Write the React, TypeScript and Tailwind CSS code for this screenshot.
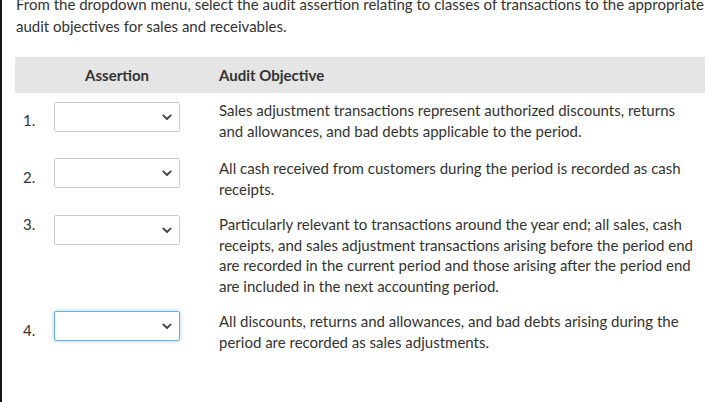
import React from "react";

const Chevron = () => (
  <svg width="10" height="7" viewBox="0 0 10 7" className="shrink-0">
    <path d="M1.3 1.4 L5 5 L8.7 1.4" fill="none" stroke="#444" strokeWidth="1.9" strokeLinecap="round" strokeLinejoin="round" />
  </svg>
);

type Row = {
  n: string;
  text: string;
  rowMt: string;
  numMt: string;
  selMt: string;
  focus?: boolean;
};

const rows: Row[] = [
  {
    n: "1.",
    text: "Sales adjustment transactions represent authorized discounts, returns and allowances, and bad debts applicable to the period.",
    rowMt: "mt-[7px]",
    numMt: "mt-[10px]",
    selMt: "mt-[2px]",
  },
  {
    n: "2.",
    text: "All cash received from customers during the period is recorded as cash receipts.",
    rowMt: "mt-[17px]",
    numMt: "mt-[9px]",
    selMt: "mt-0",
  },
  {
    n: "3.",
    text: "Particularly relevant to transactions around the year end; all sales, cash receipts, and sales adjustment transactions arising before the period end are recorded in the current period and those arising after the period end are included in the next accounting period.",
    rowMt: "mt-[15px]",
    numMt: "mt-0",
    selMt: "mt-[1px]",
  },
  {
    n: "4.",
    text: "All discounts, returns and allowances, and bad debts arising during the period are recorded as sales adjustments.",
    rowMt: "mt-[15px]",
    numMt: "mt-[9px]",
    selMt: "mt-0",
    focus: true,
  },
];

export default function App() {
  return (
    <div
      className="w-[708px] h-[402px] overflow-hidden bg-white border-l-2 border-[#161616] text-[#333333] text-[15px]"
      style={{ fontFamily: "Lato, 'Open Sans', sans-serif" }}
    >
      <p className="mt-[-7px] pl-[14px] pr-0 w-[706px] leading-[22px]">
        From the dropdown menu, select the audit assertion relating to classes of transactions to the appropriate audit objectives for sales and receivables.
      </p>
      <div className="ml-[13px] mr-[3px] mt-[20px] h-[36px] bg-[#e5e5e5] flex items-center font-bold leading-[20.5px]">
        <div className="w-[39px]" />
        <div className="w-[126px] text-center">Assertion</div>
        <div className="w-[39px]" />
        <div>Audit Objective</div>
      </div>
      {rows.map((r) => (
        <div key={r.n} className={`${r.rowMt} flex items-start pl-[21px] leading-[20.5px]`}>
          <div className={`w-[31px] ${r.numMt}`}>{r.n}</div>
          <div
            className={`${r.selMt} w-[126px] h-[30px] rounded-[2px] bg-white flex items-center justify-end pr-[7px] border ${
              r.focus
                ? "border-[#66afe9] shadow-[0_0_4px_rgba(102,175,233,0.6)]"
                : "border-[#cccccc]"
            }`}
          >
            <Chevron />
          </div>
          <div className="ml-[39px] w-[478px]">{r.text}</div>
        </div>
      ))}
    </div>
  );
}
